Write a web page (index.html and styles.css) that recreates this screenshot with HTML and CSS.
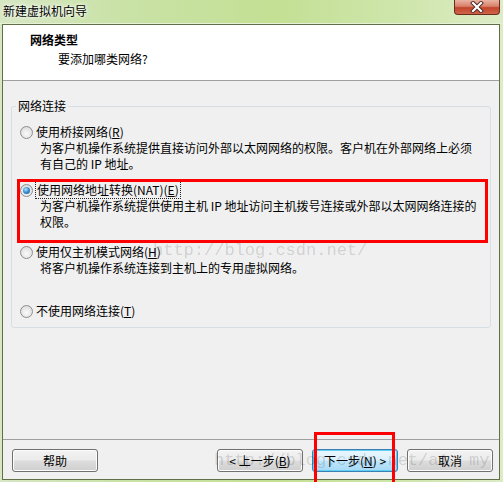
FILE: index.html
```html
<!DOCTYPE html>
<html lang="zh-CN">
<head>
    <meta charset="UTF-8">
    <title>新建虚拟机向导</title>
    <link rel="stylesheet" href="styles.css">
</head>
<body>
    <div class="window">
        <div class="titlebar">
            <span class="title">新建虚拟机向导</span>
            <span class="close">
                <svg width="16" height="12" viewBox="0 0 16 12">
                    <path d="M4 2 L12 10 M12 2 L4 10" stroke="#4a2a22" stroke-width="4" stroke-linecap="square"/>
                    <path d="M4 2 L12 10 M12 2 L4 10" stroke="#ffffff" stroke-width="2.2" stroke-linecap="square"/>
                </svg>
            </span>
        </div>

        <div class="client">
            <div class="header">
                <div class="header-title">网络类型</div>
                <div class="header-sub">要添加哪类网络?</div>
            </div>

            <div class="main">
                <fieldset class="group">
                    <legend>网络连接</legend>

                    <div class="option opt-bridge">
                        <div class="option-label"><span class="radio"></span>使用桥接网络(<u>R</u>)</div>
                        <div class="option-desc">为客户机操作系统提供直接访问外部以太网网络的权限。客户机在外部网络上必须<br>有自己的 IP 地址。</div>
                    </div>

                    <div class="option opt-nat">
                        <div class="option-label"><span class="radio checked"></span><span class="focus">使用网络地址转换(NAT)(<u>E</u>)</span></div>
                        <div class="option-desc">为客户机操作系统提供使用主机 IP 地址访问主机拨号连接或外部以太网网络连接的<br>权限。</div>
                    </div>

                    <div class="option opt-host">
                        <div class="option-label"><span class="radio"></span>使用仅主机模式网络(<u>H</u>)</div>
                        <div class="option-desc">将客户机操作系统连接到主机上的专用虚拟网络。</div>
                    </div>

                    <div class="option opt-none">
                        <div class="option-label"><span class="radio"></span>不使用网络连接(<u>T</u>)</div>
                    </div>
                </fieldset>
            </div>

            <div class="footer">
                <button class="btn">帮助</button>
                <div class="nav">
                    <button class="btn">&lt; 上一步(<u>B</u>)</button>
                    <button class="btn btn-default">下一步(<u>N</u>) &gt;</button>
                    <button class="btn">取消</button>
                </div>
            </div>
        </div>

        <div class="mark mark-option"></div>
        <div class="mark mark-next"></div>
        <div class="watermark wm-top">http://blog.csdn.net/</div>
        <div class="watermark wm-bottom">http://blog.csdn.net/a1&nbsp;&nbsp;my</div>
    </div>
</body>
</html>
```

FILE: styles.css
```css
body {
    margin: 0;
    padding: 0;
    background: #c5df9c;
    font-family: "Noto Sans CJK SC", "Liberation Sans", sans-serif;
    font-size: 12px;
    line-height: 16px;
    color: #000;
}

.window {
    position: relative;
    width: 503px;
    height: 482px;
    overflow: hidden;
    display: flex;
    flex-direction: column;
    background: linear-gradient(90deg, #d6e7c2 0%, #c9e2a6 25%, #c3e094 55%, #cfe6ac 80%, #dcecc6 100%);
}

.titlebar {
    height: 23px;
    flex-shrink: 0;
    display: flex;
    justify-content: space-between;
    align-items: flex-start;
    border-bottom: 1px solid #e6f2d6;
}

.title {
    padding: 3px 0 0 3px;
    text-shadow: 0 0 6px #fff, 0 0 3px #fff;
}

.close {
    width: 44px;
    height: 14px;
    margin-right: 3px;
    border: 1px solid #6b2c20;
    border-top: none;
    border-radius: 0 0 4px 4px;
    background: linear-gradient(180deg, #eab4a4 0%, #d8806a 45%, #c1452b 55%, #d0654a 100%);
    display: flex;
    justify-content: center;
    align-items: center;
}

.client {
    flex: 1;
    margin: 0 3px 2px 2px;
    border: 1px solid #5f7049;
    background: #f0f0f0;
    display: flex;
    flex-direction: column;
}

.header {
    height: 56px;
    flex-shrink: 0;
    box-sizing: border-box;
    padding: 7px 0 0 27px;
    background: #fff;
    border-bottom: 1px solid #a0a0a0;
}

.header-title {
    font-weight: bold;
}

.header-sub {
    margin-top: 3px;
    padding-left: 28px;
}

.main {
    flex: 1;
    padding: 17px 8px 0 8px;
}

.group {
    margin: 0;
    padding: 10px 8px 8px 8px;
    border: 1px solid #d5dfe5;
    border-radius: 3px;
}

.group legend {
    margin-left: -4px;
    padding: 0 2px;
}

.option-label {
    display: flex;
    align-items: center;
    white-space: nowrap;
}

.option-desc {
    padding-left: 20px;
    white-space: nowrap;
}

.opt-nat {
    margin-top: 10px;
}

.opt-host {
    margin-top: 14px;
}

.opt-none {
    margin-top: 27px;
}

.radio {
    width: 11px;
    height: 11px;
    margin-right: 3px;
    border: 1px solid #8e8f8f;
    border-radius: 50%;
    background: radial-gradient(circle at 50% 60%, #fbfbfb 0%, #e6e6e6 55%, #cfcfcf 100%);
    display: flex;
    justify-content: center;
    align-items: center;
}

.radio.checked::after {
    content: "";
    width: 7px;
    height: 7px;
    border-radius: 50%;
    background: radial-gradient(circle at 40% 35%, #b8e4ff 0%, #3c93d4 45%, #174f82 100%);
}

.focus {
    outline: 1px dotted #222;
    padding: 0 1px;
}

.footer {
    flex-shrink: 0;
    display: flex;
    justify-content: space-between;
    padding: 9px 6px 7px 9px;
    border-top: 1px solid #a0a0a0;
}

.nav {
    display: flex;
    gap: 9px;
}

.btn {
    width: 86px;
    height: 23px;
    box-sizing: border-box;
    padding: 0;
    font-family: inherit;
    font-size: 12px;
    color: #000;
    border: 1px solid #707070;
    border-radius: 3px;
    background: linear-gradient(180deg, #f3f3f3 0%, #ebebeb 48%, #dddddd 52%, #cfcfcf 100%);
    box-shadow: inset 0 0 0 1px #fcfcfc;
}

.btn-default {
    border-color: #3c7fb1;
    background: linear-gradient(180deg, #eaf6fd 0%, #d9f0fc 48%, #bee6fd 52%, #a7d9f5 100%);
    box-shadow: inset 0 0 0 1px #5fd1f9;
}

.mark {
    position: absolute;
    border: 3px solid #ff0000;
    box-sizing: border-box;
}

.mark-option {
    left: 17px;
    top: 179px;
    width: 471px;
    height: 64px;
}

.mark-next {
    left: 314px;
    top: 432px;
    width: 81px;
    height: 56px;
}

.watermark {
    position: absolute;
    font-family: "Liberation Mono", monospace;
    font-size: 17px;
    line-height: 22px;
    color: rgba(0, 0, 0, 0.15);
    white-space: nowrap;
}

.wm-top {
    left: 153px;
    top: 240px;
}

.wm-bottom {
    left: 214px;
    top: 450px;
}
```
